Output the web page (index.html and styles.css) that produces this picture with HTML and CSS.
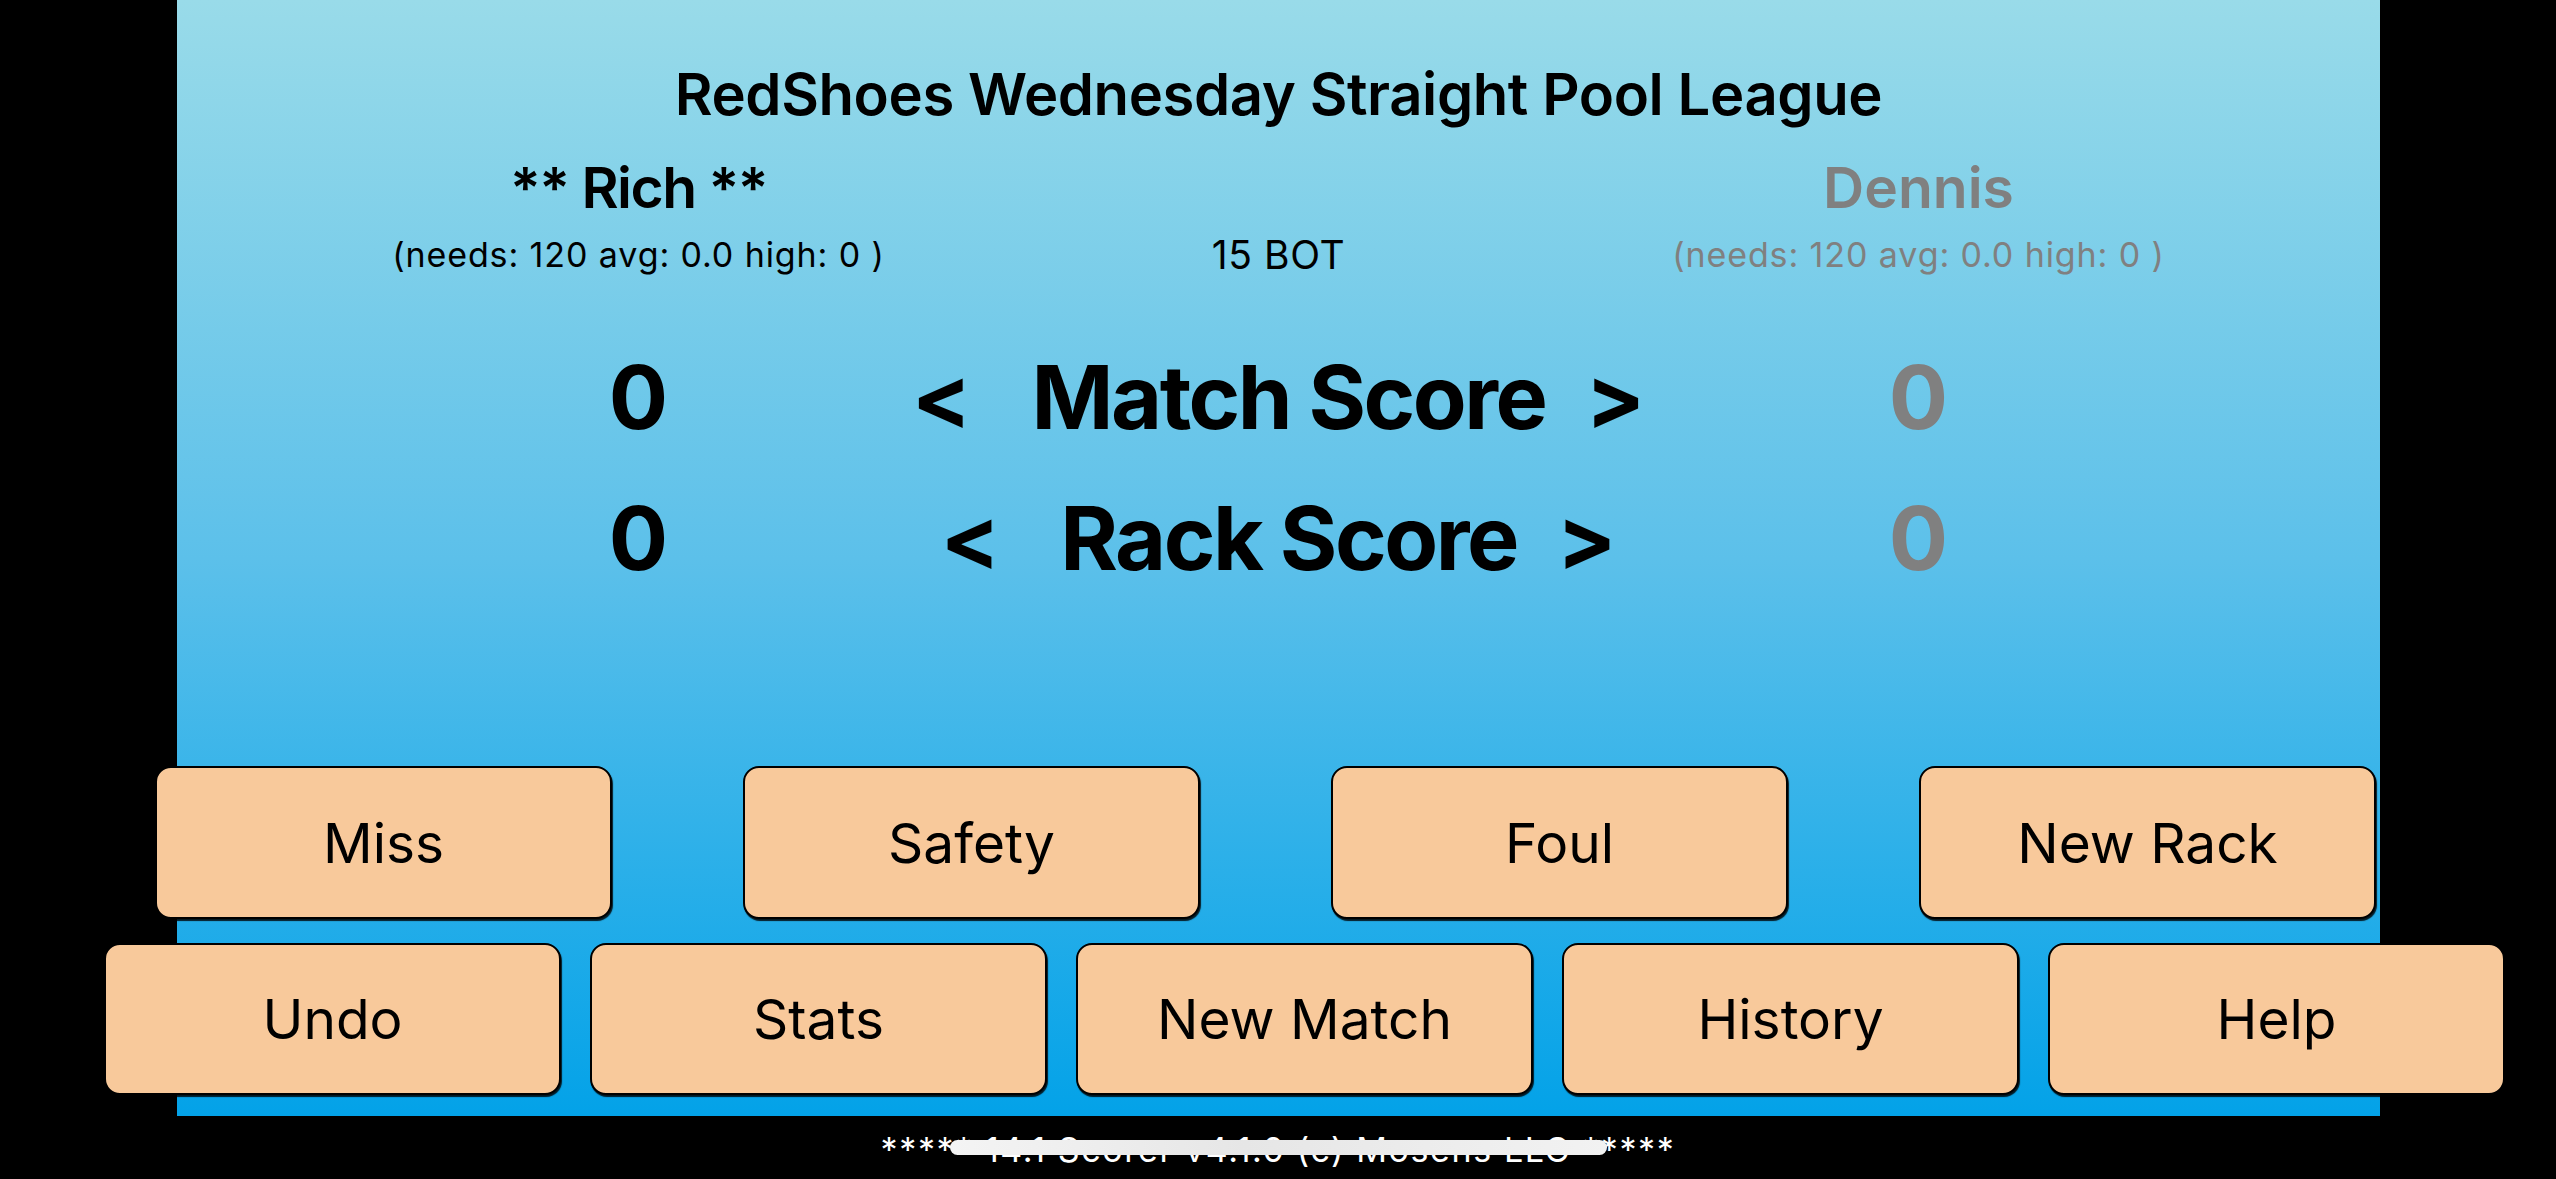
FILE: index.html
```html
<!DOCTYPE html>
<html>
<head>
<meta charset="utf-8">
<link rel="stylesheet" href="styles.css">
</head>
<body>
<div class="screen">
  <main class="panel">
    <h1 class="title">RedShoes Wednesday Straight Pool League</h1>
    <div class="grid names">
      <div class="cell rich">** Rich **</div>
      <div class="cell"></div>
      <div class="cell muted">Dennis</div>
    </div>
    <div class="grid subs">
      <div class="cell">(needs: 120 avg: 0.0 high: 0 )</div>
      <div class="cell bot">15 BOT</div>
      <div class="cell muted">(needs: 120 avg: 0.0 high: 0 )</div>
    </div>
    <div class="grid score match">
      <div class="cell">0</div>
      <div class="cell label"><span class="arrow">&lt;</span><span class="lbl">Match Score</span><span class="arrow">&gt;</span></div>
      <div class="cell muted">0</div>
    </div>
    <div class="grid score rack">
      <div class="cell">0</div>
      <div class="cell label"><span class="arrow">&lt;</span><span class="lbl">Rack Score</span><span class="arrow">&gt;</span></div>
      <div class="cell muted">0</div>
    </div>
    <div class="buttons">
      <div class="row row1">
        <button class="btn">Miss</button>
        <button class="btn">Safety</button>
        <button class="btn">Foul</button>
        <button class="btn">New Rack</button>
      </div>
      <div class="row row2">
        <button class="btn">Undo</button>
        <button class="btn">Stats</button>
        <button class="btn">New Match</button>
        <button class="btn">History</button>
        <button class="btn">Help</button>
      </div>
    </div>
  </main>
  <footer class="footer">***** 14.1 Scorer v4.1.0 (c) Mosens LLC *****</footer>
  <div class="home-indicator"></div>
</div>
</body>
</html>
```
FILE: styles.css
```css
html, body {
  margin: 0;
  padding: 0;
  background: #000;
}
body {
  font-family: Inter, "Open Sans", "Liberation Sans", sans-serif;
  color: #000;
}
.screen {
  position: relative;
  width: 2556px;
  height: 1179px;
  overflow: hidden;
}
.panel {
  width: 2203px;
  height: 1116px;
  margin: 0 0 0 177px;
  box-sizing: border-box;
  padding-top: 59px;
  padding-bottom: 21px;
  background: linear-gradient(180deg, #99dbe9 0%, #5cc0ea 50%, #03a2e8 100%);
  display: flex;
  flex-direction: column;
}
.title {
  margin: 0;
  font-size: 58px;
  line-height: 70px;
  font-weight: 600;
  text-align: center;
  letter-spacing: -0.4px;
}
.grid {
  display: grid;
  grid-template-columns: repeat(3, 640px);
  justify-content: center;
}
.cell {
  display: flex;
  justify-content: center;
  align-items: baseline;
  white-space: nowrap;
}
.muted {
  color: #808080;
}
.names {
  margin-top: 25px;
  font-size: 57px;
  line-height: 68px;
  font-weight: 600;
}
.rich {
  letter-spacing: -1.5px;
}
.subs {
  margin-top: 13px;
  font-size: 34px;
  line-height: 40px;
  font-weight: 400;
  letter-spacing: 0.9px;
}
.bot {
  font-size: 39px;
  letter-spacing: 0.6px;
}
.score {
  font-size: 88px;
  line-height: 100px;
  font-weight: 700;
}
.match {
  margin-top: 72px;
}
.rack {
  margin-top: 41px;
}
.lbl {
  margin: 0 40px 0 60px;
  letter-spacing: -2.5px;
}
.buttons {
  margin-top: auto;
  display: flex;
  flex-direction: column;
  gap: 24px;
}
.row {
  display: flex;
}
.row1 {
  margin-left: -22px;
  gap: 131px;
}
.row2 {
  margin-left: -73px;
  gap: 29px;
}
.btn {
  flex: 0 0 457px;
  width: 457px;
  height: 153px;
  box-sizing: border-box;
  background: #f8c99b;
  border: 2px solid #000;
  border-radius: 16px;
  box-shadow: 1px 2px 1px rgba(0, 0, 0, 0.85);
  font-family: Inter, "Open Sans", "Liberation Sans", sans-serif;
  font-size: 55px;
  font-weight: 400;
  color: #000;
  padding: 0;
  margin: 0;
}
.row2 .btn {
  height: 152px;
}
.footer {
  margin-top: 14px;
  text-align: center;
  color: #fff;
  font-size: 34px;
  line-height: 40px;
  letter-spacing: 1.6px;
}
.home-indicator {
  position: absolute;
  left: 950px;
  top: 1140px;
  width: 657px;
  height: 15px;
  border-radius: 8px;
  background: linear-gradient(90deg, #f4f4f4, #e6e6e6 45%, #f2f2f2);
}
```
